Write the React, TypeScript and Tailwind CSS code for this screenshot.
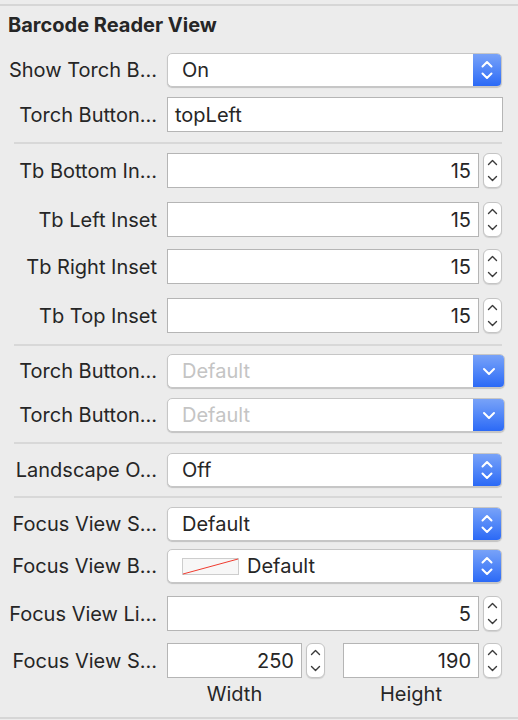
import type { ReactNode } from "react";

const FONT = "font-['Inter','Noto_Sans',sans-serif]";

function UpDown() {
  return (
    <svg width="14" height="24" viewBox="0 0 14 24" fill="none" stroke="white" strokeWidth="2" strokeLinecap="round" strokeLinejoin="round">
      <path d="M2.5 8.5 L7 4 L11.5 8.5" />
      <path d="M2.5 15.5 L7 20 L11.5 15.5" />
    </svg>
  );
}

function Down() {
  return (
    <svg width="14" height="10" viewBox="0 0 14 10" fill="none" stroke="white" strokeWidth="2" strokeLinecap="round" strokeLinejoin="round">
      <path d="M2 3 L7 8 L12 3" />
    </svg>
  );
}

function Popup({
  value,
  placeholder,
  pulldown,
  swatch,
}: {
  value?: string;
  placeholder?: string;
  pulldown?: boolean;
  swatch?: boolean;
}) {
  return (
    <div
      className={
        "flex h-[34px] items-center overflow-hidden rounded-[5px] border border-[#c6c6c6] bg-white shadow-[0_1px_1px_rgba(0,0,0,0.18)] " +
        (pulldown ? "w-[338px]" : "w-[335px]")
      }
    >
      {swatch && (
        <svg width="57" height="17" viewBox="0 0 57 17" className="ml-[14px] shrink-0">
          <rect x="0.5" y="0.5" width="56" height="16" fill="#f7f7f7" stroke="#cdcdcd" />
          <line x1="1" y1="16" x2="56" y2="1" stroke="#ef3b2f" strokeWidth="1" />
        </svg>
      )}
      <span
        className={
          "flex-1 truncate text-[20px] leading-[24px] " +
          (swatch ? "pl-[8px] " : "pl-[14px] ") +
          (placeholder ? "text-[#c4c4c4]" : "text-[#262626]")
        }
      >
        {value ?? placeholder}
      </span>
      <div
        className={
          "flex h-full items-center justify-center bg-gradient-to-b from-[#78a2f8] to-[#2b69f6] " +
          (pulldown ? "w-[31px]" : "w-[28px]")
        }
      >
        {pulldown ? <Down /> : <UpDown />}
      </div>
    </div>
  );
}

function TextField({ value, width, align }: { value: string; width: string; align?: "right" }) {
  return (
    <div
      className={
        "flex h-[35px] items-center border border-[#b5b5b5] bg-white px-[7px] text-[20px] leading-[24px] text-[#262626] " +
        width +
        (align === "right" ? " justify-end" : "")
      }
    >
      {value}
    </div>
  );
}

function Stepper() {
  return (
    <div className="ml-[4px] flex h-[35px] w-[19px] flex-col items-center justify-between rounded-[6px] border border-[#c4c4c4] bg-white py-[5px] shadow-[0_1px_1px_rgba(0,0,0,0.12)]">
      <svg width="11" height="7" viewBox="0 0 11 7" fill="none" stroke="#3a3a3a" strokeWidth="1.4" strokeLinecap="round" strokeLinejoin="round">
        <path d="M1.5 5.5 L5.5 1.5 L9.5 5.5" />
      </svg>
      <svg width="11" height="7" viewBox="0 0 11 7" fill="none" stroke="#3a3a3a" strokeWidth="1.4" strokeLinecap="round" strokeLinejoin="round">
        <path d="M1.5 1.5 L5.5 5.5 L9.5 1.5" />
      </svg>
    </div>
  );
}

function Row({ label, mt, children }: { label: string; mt: string; children: ReactNode }) {
  return (
    <div className={"flex items-center " + mt}>
      <div className="w-[157px] shrink-0 whitespace-nowrap text-right text-[20px] leading-[24px] text-[#262626]">
        {label}
      </div>
      <div className="ml-[10px] flex items-center">{children}</div>
    </div>
  );
}

function Separator({ mt }: { mt: string }) {
  return <div className={"ml-[14px] h-[2px] w-[488px] bg-[#d8d8d8] " + mt} />;
}

function NumberRow({ label, value, mt }: { label: string; value: string; mt: string }) {
  return (
    <Row label={label} mt={mt}>
      <TextField value={value} width="w-[312px]" align="right" />
      <Stepper />
    </Row>
  );
}

export default function App() {
  return (
    <div className={"min-h-[720px] w-[518px] overflow-hidden bg-[#ececec] " + FONT}>
      <div className="flex flex-col">
        <div className="mt-[4px] h-[2px] w-full bg-[#d6d6d6]" />
        <div className="mt-[7px] h-[24px] pl-[8px] text-[20px] font-bold leading-[24px] text-[#262626]">
          Barcode Reader View
        </div>

        <Row label="Show Torch B…" mt="mt-[16px]">
          <Popup value="On" />
        </Row>
        <Row label="Torch Button…" mt="mt-[10px]">
          <TextField value="topLeft" width="w-[336px]" />
        </Row>

        <Separator mt="mt-[10px]" />

        <NumberRow label="Tb Bottom In…" value="15" mt="mt-[9px]" />
        <NumberRow label="Tb Left Inset" value="15" mt="mt-[14px]" />
        <NumberRow label="Tb Right Inset" value="15" mt="mt-[12px]" />
        <NumberRow label="Tb Top Inset" value="15" mt="mt-[14px]" />

        <Separator mt="mt-[11px]" />

        <Row label="Torch Button…" mt="mt-[8px]">
          <Popup placeholder="Default" pulldown />
        </Row>
        <Row label="Torch Button…" mt="mt-[10px]">
          <Popup placeholder="Default" pulldown />
        </Row>

        <Separator mt="mt-[10px]" />

        <Row label="Landscape O…" mt="mt-[9px]">
          <Popup value="Off" />
        </Row>

        <Separator mt="mt-[9px]" />

        <Row label="Focus View S…" mt="mt-[9px]">
          <Popup value="Default" />
        </Row>
        <Row label="Focus View B…" mt="mt-[8px]">
          <Popup value="Default" swatch />
        </Row>
        <NumberRow label="Focus View Li…" value="5" mt="mt-[13px]" />
        <Row label="Focus View S…" mt="mt-[12px]">
          <TextField value="250" width="w-[135px]" align="right" />
          <Stepper />
          <div className="ml-[18px]">
            <TextField value="190" width="w-[136px]" align="right" />
          </div>
          <Stepper />
        </Row>
        <div className="mt-[4px] flex text-[20px] leading-[24px] text-[#262626]">
          <div className="ml-[167px] w-[135px] text-center">Width</div>
          <div className="ml-[41px] w-[136px] text-center">Height</div>
        </div>

        <div className="mt-[11px] h-[2px] w-full bg-[#d6d6d6]" />
      </div>
    </div>
  );
}
